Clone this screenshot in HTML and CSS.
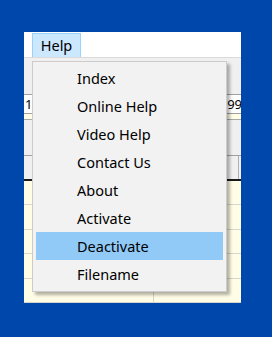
FILE: index.html
```html
<!DOCTYPE html>
<html>
	<head>
		<meta charset="UTF-8">
		<title>Help menu</title>
		<link rel="stylesheet" href="styles.css">
	</head>
	<body>
		<div class="window">
			<div class="menubar">
				<div class="menubar_item active">Help</div>
			</div>

			<div class="content">
				<div class="toolbar"></div>
				<div class="edit_row">
					<span class="edit_left">10</span>
					<span class="edit_right">99</span>
				</div>
				<div class="strip"></div>
				<div class="panel"></div>
				<div class="grid_head">
					<div class="head_cell"></div>
					<div class="head_cell last"></div>
				</div>
				<div class="grid">
					<div class="grid_row"><div class="cell"></div><div class="cell"></div></div>
					<div class="grid_row"><div class="cell"></div><div class="cell"></div></div>
					<div class="grid_row"><div class="cell"></div><div class="cell"></div></div>
					<div class="grid_row"><div class="cell"></div><div class="cell"></div></div>
					<div class="grid_row"><div class="cell"></div><div class="cell"></div></div>
				</div>
			</div>

			<!-- drop down of the Help menu -->
			<ul class="dropdown">
				<li>Index</li>
				<li>Online Help</li>
				<li>Video Help</li>
				<li>Contact Us</li>
				<li>About</li>
				<li>Activate</li>
				<li class="hover">Deactivate</li>
				<li>Filename</li>
			</ul>
		</div>
	</body>
</html>
```

FILE: styles.css
```css
* {
	margin: 0;
	padding: 0;
	box-sizing: border-box;
}
body {
	background-color: #0047ab;
	padding: 32px 0 0 24px;
	font-family: "Noto Sans", "Open Sans", sans-serif;
	font-size: 14.5px;
	color: #000;
}
ul {
	list-style: none;
}

.window {
	width: 217px;
	height: 271px;
	background-color: #fffde6;
	position: relative;
	overflow: hidden;
	display: flex;
	flex-direction: column;
}

.menubar {
	height: 29px;
	background-color: #fff;
	border-bottom: 1px solid #dadada;
	display: flex;
	align-items: flex-end;
	padding-left: 8px;
}
.menubar_item {
	height: 24px;
	width: 49px;
	line-height: 22px;
	text-align: center;
	border: 1px solid transparent;
	border-bottom: 0;
}
.menubar_item.active {
	background-color: #cce8ff;
	border-color: #99d1ff;
}

.content {
	flex: 1;
	display: flex;
	flex-direction: column;
}
.toolbar {
	height: 36px;
	background-color: #f0f0f0;
}
.edit_row {
	height: 20px;
	background-color: #fff;
	border-top: 1px solid #a0a0a0;
	border-bottom: 1px solid #a0a0a0;
	display: flex;
	justify-content: space-between;
	align-items: center;
	font-size: 13px;
	line-height: 18px;
}
.edit_left {
	padding-left: 1px;
}
.edit_right {
	margin-right: -1px;
}
.strip {
	height: 6px;
	background-color: #fffde6;
	border-bottom: 1px solid #a8a8a8;
}
.panel {
	height: 36px;
	background-color: #f0f0f0;
	border-bottom: 1px solid #a0a0a0;
}
.grid_head {
	height: 25px;
	background-color: #f0f0f0;
	border-bottom: 2px solid #1a1a1a;
	display: flex;
}
.head_cell {
	flex-shrink: 0;
	width: 130px;
	border-right: 1px solid #b0b0b0;
}
.head_cell.last {
	width: 85px;
}

.grid_row {
	height: 24.5px;
	border-bottom: 1px solid #d6d6cc;
	display: flex;
}
.cell {
	flex-shrink: 0;
	width: 130px;
	border-right: 1px solid #d6d6cc;
}

.dropdown {
	position: absolute;
	left: 8px;
	top: 29px;
	width: 195px;
	height: 231px;
	background-color: #f2f2f2;
	border: 1px solid #cccccc;
	box-shadow: 3px 3px 3px rgba(0, 0, 0, 0.3);
	padding: 2px 3px;
}
.dropdown li {
	height: 28px;
	line-height: 27px;
	padding-left: 40px;
	border: 1px solid transparent;
}
.dropdown li.hover {
	background-color: #91c9f7;
	border-color: #91c9f7;
}
```
